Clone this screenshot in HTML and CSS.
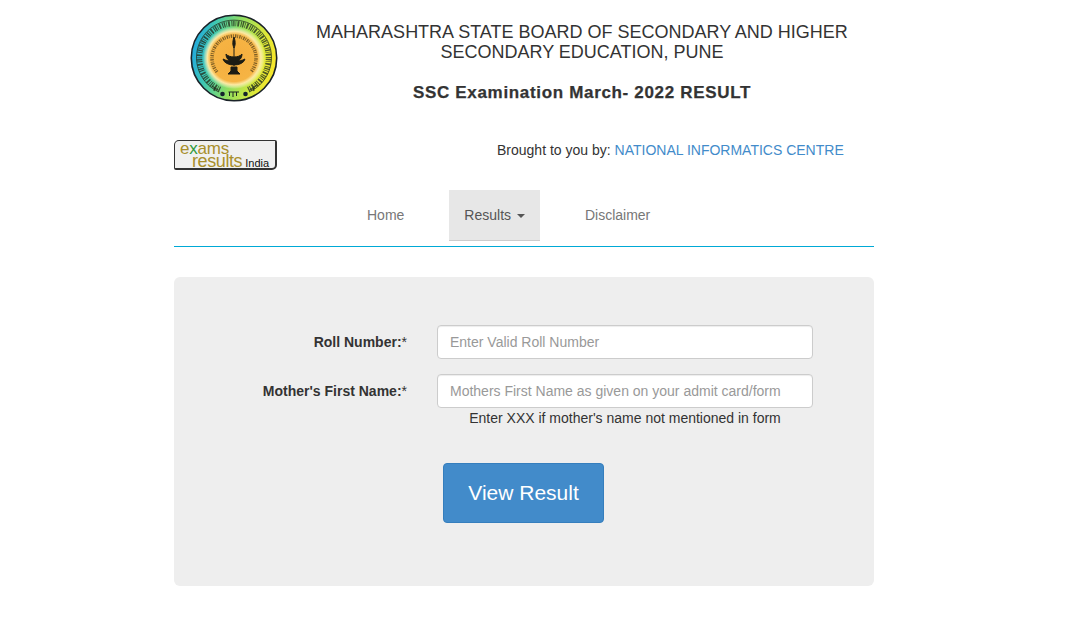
FILE: index.html
```html
<!DOCTYPE html>
<html lang="en">
<head>
<meta charset="utf-8">
<title>SSC Examination March- 2022 RESULT</title>
<link rel="stylesheet" href="styles.css">
</head>
<body>
<div class="page">
  <header class="masthead">
    <div class="seal-wrap">
      <svg class="seal" width="88" height="88" viewBox="0 0 88 88" aria-label="Board seal">
        <defs>
          <linearGradient id="ring" x1="0" y1="0.4" x2="1" y2="0.6">
            <stop offset="0" stop-color="#20a8e0"/>
            <stop offset="0.22" stop-color="#40c8b0"/>
            <stop offset="0.5" stop-color="#90de60"/>
            <stop offset="0.8" stop-color="#dce83a"/>
            <stop offset="1" stop-color="#fae628"/>
          </linearGradient>
          <radialGradient id="core">
            <stop offset="0" stop-color="#f5ae3e"/>
            <stop offset="0.76" stop-color="#f6b444"/>
            <stop offset="0.86" stop-color="#fce7a0"/>
            <stop offset="1" stop-color="#fffbe0" stop-opacity="0"/>
          </radialGradient>
        </defs>
        <circle cx="44" cy="44" r="42.7" fill="url(#ring)" stroke="#1a2228" stroke-width="1.600"/>
        <circle cx="44" cy="44" r="31" fill="url(#core)"/>
        <g fill="none" stroke="#23301f">
          <path d="M29 78 A37.500 37.500 0 1 1 59 78" stroke-width="1" opacity="0.75"/>
          <path d="M30 75.500 A34.500 34.500 0 1 1 58 75.500" stroke-width="5.500" stroke-dasharray="1.300 1 0.700 1.200 1.800 1.500 1 0.800" opacity="0.78"/>
          <path d="M27 58 A22 22 0 1 1 61 58" stroke="#4c3b1a" stroke-width="3.500" stroke-dasharray="1.300 0.900 0.800 1.200" opacity="0.72"/>
        </g>
        <circle cx="32.500" cy="80" r="2.300" fill="#14222c"/>
        <circle cx="55.500" cy="80" r="2.300" fill="#14222c"/>
        <path d="M38.500 78 H49 M39.500 78 V82 M43 78 V83 M46.500 78 V82" fill="none" stroke="#1c2620" stroke-width="1"/>
        <path d="M22 72 L28 76 M25 74 L24 77 M60 76 L67 71 M63 74 L64 77" fill="none" stroke="#23301f" stroke-width="1.500" opacity="0.75"/>
        <path d="M44 23 C42 29 43 32 44 34 C45 32 46 29 44 23 Z M44 33 L44 52 M33 45 C35 53 53 53 55 45 C50 48 38 48 33 45 Z M36 40 C36 46 41 48 44 48 C47 48 52 46 52 40 C49 44 39 44 36 40 Z M41 53 L47 53 L47 57 L50 60 L38 60 L41 57 Z" fill="#1c1c14" stroke="#1c1c14" stroke-width="1"/>
      </svg>
    </div>
    <div class="titles">
      <h1 class="board">MAHARASHTRA STATE BOARD OF SECONDARY AND HIGHER SECONDARY EDUCATION, PUNE</h1>
      <h2 class="exam">SSC Examination March- 2022 RESULT</h2>
    </div>
  </header>

  <div class="byline">
    <a class="er-logo" href="#">
      <span class="er-exams">e<i>x</i>ams</span>
      <span class="er-results"><span class="er-word">results</span><b>India</b></span>
    </a>
    <p class="credit">Brought to you by: <a href="#">NATIONAL INFORMATICS CENTRE</a></p>
  </div>

  <nav class="nav">
    <a class="nav-item" href="#">Home</a>
    <a class="nav-item is-open" href="#">Results <span class="caret"></span></a>
    <a class="nav-item" href="#">Disclaimer</a>
  </nav>

  <form class="panel">
    <div class="field">
      <label class="field-label" for="roll">Roll Number:<span class="req">*</span></label>
      <input class="field-input" id="roll" type="text" placeholder="Enter Valid Roll Number">
    </div>
    <div class="field field-mother">
      <label class="field-label" for="mother">Mother's First Name:<span class="req">*</span></label>
      <input class="field-input" id="mother" type="text" placeholder="Mothers First Name as given on your admit card/form">
    </div>
    <p class="hint">Enter XXX if mother's name not mentioned in form</p>
    <button class="submit" type="button">View Result</button>
  </form>
</div>
</body>
</html>
```
FILE: styles.css
```css
* { box-sizing: border-box; }
html, body { margin: 0; background: #fff; }
body {
  font-family: "Liberation Sans", Arial, sans-serif;
  font-size: 14px;
  line-height: 20px;
  color: #333;
}
.page { width: 700px; margin-left: 174px; }

.masthead { display: flex; height: 130px; }
.seal-wrap { width: 134px; padding: 14px 0 0 16px; flex: none; }
.seal { display: block; }
.titles { width: 566px; padding-top: 22px; text-align: center; }
.board {
  margin: 0 0 0 7px;
  width: 534px;
  font-size: 18px;
  line-height: 20px;
  font-weight: 400;
  color: #333;
}
.exam {
  margin: 20px 0 0 7px;
  width: 534px;
  font-size: 17px;
  line-height: 22px;
  font-weight: 700;
  letter-spacing: 0.67px;
  -webkit-text-stroke: 0.25px #333;
  color: #333;
  white-space: nowrap;
}

.byline { display: flex; height: 60px; padding-top: 10px; }
.er-logo {
  display: block;
  width: 103px;
  height: 30px;
  flex: none;
  padding: 1px 0 0 5px;
  background: #f0f0f0;
  border: solid #333;
  border-width: 1px 2px 2px 1px;
  border-radius: 5px 2px 5px 2px;
  color: #a88f2c;
  text-decoration: none;
  overflow: hidden;
}
.er-exams { display: block; font-size: 17px; line-height: 13px; letter-spacing: -0.2px; }
.er-exams i { font-style: normal; color: #2f9a3c; }
.er-results { display: flex; align-items: baseline; padding-left: 12px; line-height: 13px; }
.er-word { font-size: 18px; letter-spacing: -0.4px; }
.er-results b { margin-left: 3px; font-size: 11px; line-height: 10px; font-weight: 400; color: #111; }
.credit { margin: 0 0 0 220px; line-height: 20px; color: #333; }
.credit a { color: #428bca; text-decoration: none; }

.nav {
  display: flex;
  height: 57px;
  padding-left: 178px;
  border-bottom: 1px solid #00a9d6;
}
.nav-item {
  display: block;
  height: 51px;
  padding: 15px;
  margin-right: 30px;
  color: #777;
  text-decoration: none;
}
.nav-item.is-open { color: #555; background: #e7e7e7; border-bottom: 1px solid #ccc; }
.caret {
  display: inline-block;
  width: 0;
  height: 0;
  margin-left: 2px;
  vertical-align: middle;
  border-top: 4px solid #555;
  border-left: 4px solid transparent;
  border-right: 4px solid transparent;
}

.panel {
  display: block;
  height: 309px;
  margin-top: 30px;
  padding-top: 48px;
  background: #eee;
  border-radius: 6px;
}
.field { display: flex; align-items: center; height: 34px; }
.field-mother { margin-top: 15px; }
.field-label {
  width: 233px;
  flex: none;
  text-align: right;
  font-weight: 700;
}
.req { font-weight: 400; }
.field-input {
  width: 376px;
  height: 34px;
  margin-left: 30px;
  padding: 6px 12px;
  font: inherit;
  color: #555;
  background: #fff;
  border: 1px solid #ccc;
  border-radius: 4px;
  box-shadow: inset 0 1px 1px rgba(0,0,0,.075);
}
.field-input::placeholder { color: #999; opacity: 1; }
.hint { margin: 0 0 0 263px; width: 376px; text-align: center; line-height: 20px; }
.submit {
  display: block;
  width: 161px;
  height: 60px;
  margin: 35px 0 0 269px;
  font: inherit;
  font-size: 21px;
  color: #fff;
  background: #428bca;
  border: 1px solid #357ebd;
  border-radius: 4px;
}
```
